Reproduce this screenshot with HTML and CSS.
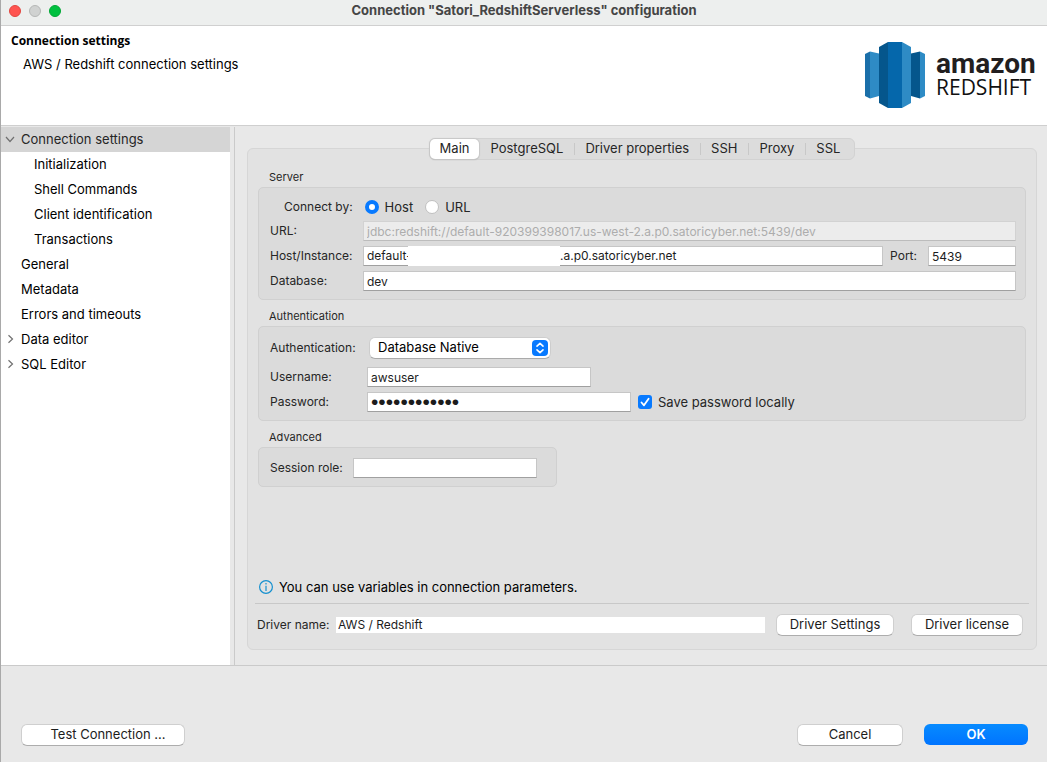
FILE: index.html
```html
<!DOCTYPE html>
<html lang="en">
<head>
<meta charset="utf-8">
<title>Connection "Satori_RedshiftServerless" configuration</title>
<link rel="stylesheet" href="styles.css">
</head>
<body>
<div class="window">
  <header class="titlebar">
    <div class="lights">
      <button class="light light-close" aria-label="Close"></button>
      <button class="light light-min" aria-label="Minimize"></button>
      <button class="light light-zoom" aria-label="Zoom"></button>
    </div>
    <h1 class="window-title">Connection "Satori_RedshiftServerless" configuration</h1>
  </header>

  <section class="banner">
    <div class="banner-text">
      <h2 class="banner-title">Connection settings</h2>
      <p class="banner-sub">AWS / Redshift connection settings</p>
    </div>
    <div class="logo">
      <svg class="logo-mark" viewBox="0 0 60 66" aria-hidden="true">
        <path fill="#1a6fa9" d="M0 12 5 9.500V56.500L0 54z"/>
        <path fill="#2e8bc5" d="M5 9.500 14 11.500V54L5 56.500z"/>
        <path fill="#05568c" d="M46 11.500 55 9.500V56.500L46 54z"/>
        <path fill="#2e8bc5" d="M55 9.500 60 12V54L55 56.500z"/>
        <path fill="#05568c" d="M14 5 23 0V66L14 61z"/>
        <path fill="#0567ab" d="M23 0H37V66H23z"/>
        <path fill="#2e8bc5" d="M37 0 46 5V61L37 66z"/>
      </svg>
      <div class="logo-words">
        <span class="logo-amazon">amazon</span>
        <span class="logo-redshift">REDSHIFT</span>
      </div>
    </div>
  </section>

  <main class="body">
    <nav class="tree" aria-label="Settings pages">
      <a class="node selected" href="#"><svg class="arrow" viewBox="0 0 10 10"><path d="M1 3 5 7.500 9 3"/></svg>Connection settings</a>
      <a class="node child" href="#">Initialization</a>
      <a class="node child" href="#">Shell Commands</a>
      <a class="node child" href="#">Client identification</a>
      <a class="node child" href="#">Transactions</a>
      <a class="node" href="#"><span class="arrow"></span>General</a>
      <a class="node" href="#"><span class="arrow"></span>Metadata</a>
      <a class="node" href="#"><span class="arrow"></span>Errors and timeouts</a>
      <a class="node" href="#"><svg class="arrow" viewBox="0 0 10 10"><path d="M3.500 1.200 7.500 5 3.500 8.800"/></svg>Data editor</a>
      <a class="node" href="#"><svg class="arrow" viewBox="0 0 10 10"><path d="M3.500 1.200 7.500 5 3.500 8.800"/></svg>SQL Editor</a>
    </nav>

    <section class="content">
      <div class="tabs" role="tablist">
        <button class="tab active" role="tab" aria-selected="true">Main</button>
        <button class="tab" role="tab">PostgreSQL</button>
        <button class="tab" role="tab">Driver properties</button>
        <button class="tab" role="tab">SSH</button>
        <button class="tab" role="tab">Proxy</button>
        <button class="tab" role="tab">SSL</button>
      </div>
      <form class="panel">
        <h3 class="group-title">Server</h3>
        <div class="group server">
          <div class="connect-row" role="radiogroup" aria-labelledby="connect-by">
            <span class="label" id="connect-by">Connect by:</span>
            <label class="choice"><input class="radio" type="radio" name="by" checked>Host</label>
            <label class="choice"><input class="radio" type="radio" name="by">URL</label>
          </div>
          <div class="row">
            <label class="label" for="url">URL:</label>
            <input class="field" id="url" disabled value="jdbc:redshift://default-920399398017.us-west-2.a.p0.satoricyber.net:5439/dev">
          </div>
          <div class="row">
            <label class="label" for="host">Host/Instance:</label>
            <div class="field host">
              <input class="host-start" id="host" value="default-">
              <span class="host-mask"></span>
              <input class="host-end" aria-label="Host domain" value=".a.p0.satoricyber.net">
            </div>
            <label class="label port-label" for="port">Port:</label>
            <input class="field port" id="port" value="5439">
          </div>
          <div class="row">
            <label class="label" for="database">Database:</label>
            <input class="field" id="database" value="dev">
          </div>
        </div>

        <h3 class="group-title">Authentication</h3>
        <div class="group auth">
          <div class="row auth-kind">
            <label class="label" for="auth">Authentication:</label>
            <div class="picker">
              <select class="select" id="auth"><option>Database Native</option></select>
              <svg class="picker-icon" viewBox="0 0 16 16" aria-hidden="true"><rect width="16" height="16" rx="4" fill="#087aff" stroke="none"/><path d="M5 6.200 8 3.300 11 6.200M5 9.800 8 12.700 11 9.800"/></svg>
            </div>
          </div>
          <div class="row">
            <label class="label" for="user">Username:</label>
            <input class="field user" id="user" value="awsuser">
          </div>
          <div class="row">
            <label class="label" for="password">Password:</label>
            <input class="field password" id="password" type="password" value="awsuser12345">
            <label class="choice save"><input class="check" type="checkbox" checked>Save password locally</label>
          </div>
        </div>

        <h3 class="group-title">Advanced</h3>
        <div class="group advanced">
          <label class="label" for="role">Session role:</label>
          <input class="field" id="role">
        </div>

        <p class="hint">
          <svg class="hint-icon" viewBox="0 0 14 14" aria-hidden="true"><circle cx="7" cy="7" r="6.400"/><path d="M7 3V4.500M7 5.800V11"/></svg>
          You can use variables in connection parameters.
        </p>
        <div class="driver">
          <label class="label" for="driver">Driver name:</label>
          <input class="driver-name" id="driver" readonly value="AWS / Redshift">
          <button class="button driver-settings" type="button">Driver Settings</button>
          <button class="button driver-license" type="button">Driver license</button>
        </div>
      </form>
    </section>
  </main>

  <footer class="footer">
    <button class="button test">Test Connection ...</button>
    <button class="button cancel">Cancel</button>
    <button class="button ok">OK</button>
  </footer>
</div>
</body>
</html>
```
FILE: styles.css
```css
* { box-sizing: border-box; }

body {
  margin: 0;
  background: #e8e8e8;
  color: #000;
  font: 13px/16px Inter, "Liberation Sans", sans-serif;
}

h1, h2, h3, p { margin: 0; }
button, input, select { font: inherit; color: inherit; }

.window {
  min-height: 100vh;
  display: flex;
  flex-direction: column;
  border-left: 1px solid #a9a9a9;
}

.titlebar {
  display: grid;
  grid-template-columns: 80px 1fr 80px;
  align-items: start;
  height: 26px;
  padding-top: 2px;
  background: #edefee;
  border-bottom: 1px solid #d0d0d0;
}
.lights { display: flex; gap: 8px; padding: 3px 0 0 8px; }
.light {
  width: 12px;
  height: 12px;
  padding: 0;
  border: 1px solid #e2463f;
  border-radius: 50%;
  background: #ff5450;
}
.light-min { background: #d0d2d1; border-color: #b5b7b6; }
.light-zoom { background: #00c03f; border-color: #00a835; }
.window-title {
  font-size: 13px;
  font-weight: 700;
  line-height: 16px;
  text-align: center;
  color: #454545;
}

.banner {
  display: flex;
  justify-content: space-between;
  height: 100px;
  padding: 7px 12px 0 10px;
  background: #fff;
  border-bottom: 1px solid #cfcfcf;
}
.banner-title { font: bold 12px/16px "Open Sans", sans-serif; }
.banner-sub { padding: 7px 0 0 12px; }
.logo { display: flex; gap: 11px; padding-top: 9px; }
.logo-mark { width: 60px; height: 66px; }
.logo-words { display: flex; flex-direction: column; width: 99px; padding-top: 6px; }
.logo-amazon { font: bold 28px/32px Roboto, sans-serif; color: #221e1f; }
.logo-redshift { font: 21px/14px "Open Sans", sans-serif; color: #111; }

.body { flex: 1; display: flex; padding-top: 1px; }

.tree {
  width: 229px;
  flex: none;
  background: #fff;
}
.node {
  display: flex;
  align-items: center;
  gap: 6px;
  height: 25px;
  padding: 0 0 2px 4px;
  color: #000;
  text-decoration: none;
}
.selected { background: #d5d5d5; color: #262626; }
.child { padding-left: 33px; }
.arrow {
  width: 10px;
  height: 10px;
  fill: none;
  stroke: #707070;
  stroke-width: 1.2;
}

.content {
  flex: 1;
  display: flex;
  flex-direction: column;
  margin-left: 4px;
  padding: 11px 10px 15px 12px;
  border-left: 1px solid #cacaca;
}
.tabs {
  z-index: 1;
  align-self: center;
  display: flex;
  height: 22px;
  margin-bottom: -12px;
  padding-right: 3px;
  border: 1px solid #d2d2d2;
  border-radius: 6px;
  background: #dcdcdc;
}
.tab {
  padding: 0 11px 2px;
  border: 0;
  background: none;
  color: #262626;
}
.tab + .tab + .tab {
  background: linear-gradient(#c8c8c8, #c8c8c8) 0 50% / 1px 12px no-repeat;
}
.tab.active {
  height: 20px;
  padding: 0 10px 2px;
  border-radius: 5px;
  background: #fff;
  box-shadow: 0 0 1px 1px #c8c8c8, 0 1px 1px #aaa;
}

.panel {
  flex: 1;
  display: flex;
  flex-direction: column;
  padding: 21px 10px 13px;
  border: 1px solid #d6d6d6;
  border-radius: 6px;
  background: #e2e2e2;
}
.group-title {
  padding-left: 11px;
  font-size: 11px;
  font-weight: 400;
  line-height: 14px;
  color: #262626;
}
.group {
  margin: 3px 0 9px;
  border: 1px solid #d0d0d0;
  border-radius: 5px;
  background: #dbdbdb;
}
.label { font-size: 12px; color: #262626; }
.row { display: flex; align-items: center; }

.field {
  min-width: 0;
  flex: 1;
  height: 20px;
  padding: 0 3px;
  border: 1px solid #c6c6c6;
  border-bottom-color: #a0a0a0;
  border-radius: 0;
  background: #fff;
  font-size: 12px;
  color: #1c1c1c;
}
.field:disabled {
  background: #ececec;
  border-color: #d2d2d2;
  border-bottom-color: #bcbcbc;
  color: #adadad;
}

.server {
  display: flex;
  flex-direction: column;
  gap: 5px;
  padding: 9px 9px 8px 11px;
}
.server .row > .label:first-child { width: 93px; }
.connect-row { display: flex; align-items: center; gap: 12px; padding-left: 14px; height: 19px; }
.choice { display: flex; align-items: center; gap: 6px; color: #262626; }
.radio {
  appearance: none;
  width: 14px;
  height: 14px;
  margin: 0;
  border: 1px solid #c0c0c0;
  border-radius: 50%;
  background: #fff;
}
.radio:checked { border: 4px solid #087aff; }

.host { display: flex; padding: 0; }
.host input {
  min-width: 0;
  padding: 0;
  border: 0;
  background: none;
}
.host .host-start { width: 44px; padding-left: 3px; }
.host-mask { width: 152px; height: 20px; margin-top: -1px; background: #fff; }
.host .host-end { flex: 1; }
.port-label { padding: 0 11px 0 7px; }
.port { flex: 0 0 88px; }

.auth {
  display: flex;
  flex-direction: column;
  gap: 5px;
  padding: 10px 11px 8px;
}
.auth .row > .label:first-child { width: 97px; }
.auth-kind { margin-bottom: 3px; }
.picker { display: grid; align-items: center; width: 182px; margin-left: 2px; }
.select {
  grid-area: 1 / 1;
  appearance: none;
  height: 22px;
  padding: 0 8px 2px;
  border: 1px solid #cdcdcd;
  border-bottom-color: #aaa;
  border-radius: 6px;
  background: #fff;
}
.picker-icon {
  grid-area: 1 / 1;
  justify-self: end;
  width: 16px;
  height: 16px;
  margin-right: 3px;
  pointer-events: none;
  fill: none;
  stroke: #fff;
  stroke-width: 1.6;
  stroke-linecap: round;
  stroke-linejoin: round;
}
.user { flex: 0 0 224px; }
.password { flex: 0 0 264px; font: 21px/18px "Liberation Sans", sans-serif; }
.save { padding-left: 7px; }
.check {
  appearance: none;
  width: 14px;
  height: 14px;
  margin: 0;
  border-radius: 3px;
  background: #fff;
}
.check:checked {
  background: #087aff url("data:image/svg+xml,%3Csvg xmlns='http://www.w3.org/2000/svg' viewBox='0 0 14 14'%3E%3Cpath d='M3.500 7.500 6 10.300 10.600 3.700' fill='none' stroke='white' stroke-width='1.800' stroke-linecap='round' stroke-linejoin='round'/%3E%3C/svg%3E");
}

.advanced {
  display: flex;
  align-items: center;
  width: 299px;
  padding: 10px 19px 8px 11px;
}
.advanced .label { width: 83px; }

.hint {
  display: flex;
  align-items: center;
  gap: 6px;
  margin: auto -3px 0;
  padding: 0 4px 8px;
  border-bottom: 1px solid #c8c8c8;
}
.hint-icon { width: 14px; height: 14px; fill: none; stroke: #1590cf; stroke-width: 1.2; }

.driver { display: flex; align-items: center; margin-left: -1px; padding: 10px 3px 0 0; }
.driver .label { width: 79px; }
.driver-name {
  flex: 1;
  min-width: 0;
  height: 16px;
  padding: 0 2px;
  border: 0;
  background: #fff;
  font-size: 12px;
  color: #1c1c1c;
}

.button {
  height: 22px;
  padding: 0 0 2px;
  border: 1px solid #cfcfcf;
  border-bottom-color: #adadad;
  border-radius: 6px;
  background: #fff;
  color: #1c1c1c;
}
.driver-settings { width: 118px; margin-left: 11px; }
.driver-license { width: 112px; margin-left: 17px; }

.footer {
  display: flex;
  height: 97px;
  padding: 58px 19px 0 20px;
  border-top: 1px solid #cacaca;
}
.test { width: 164px; padding-left: 10px; }
.cancel { width: 106px; margin-left: auto; }
.ok {
  width: 104px;
  height: 21px;
  margin-left: 21px;
  border: 0;
  background: linear-gradient(#078bff, #0074ff);
  color: #fff;
  font-weight: 600;
}
```
